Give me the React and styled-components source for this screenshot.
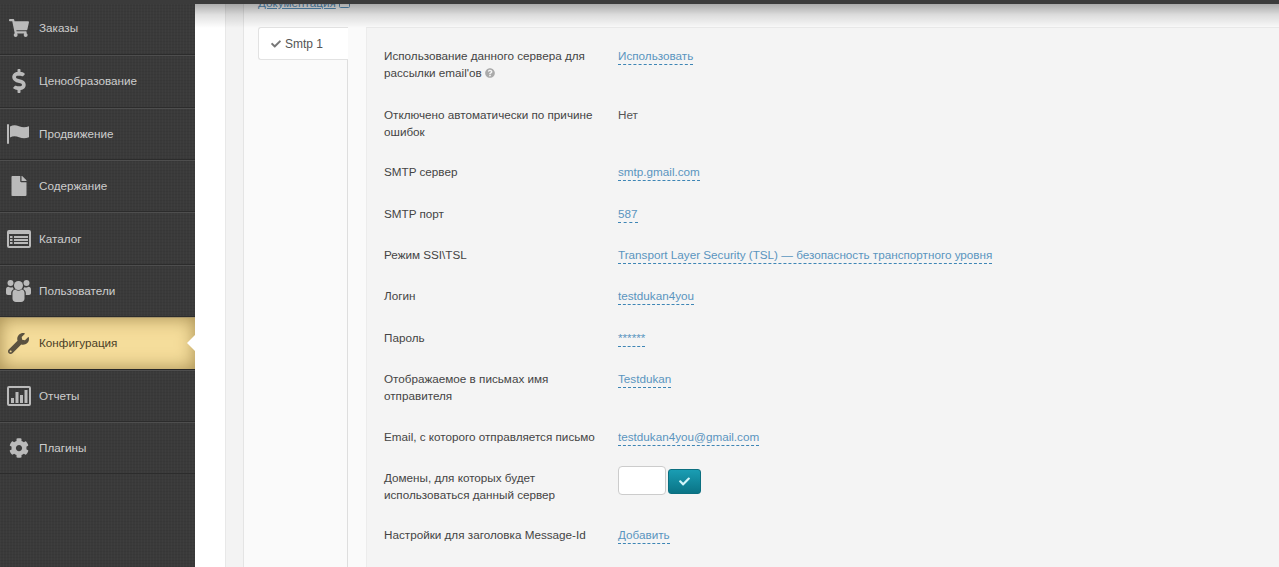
import React from "react";
import styled, { createGlobalStyle } from "styled-components";
import { FaShoppingCart, FaDollarSign, FaFile, FaWrench, FaCog, FaCheck, FaQuestionCircle } from "react-icons/fa";

const Global = createGlobalStyle`
  html, body { margin: 0; padding: 0; height: 100%; overflow: hidden; background: #fff; }
  #root { height: 567px; }
  * { box-sizing: border-box; }
`;
const Page = styled.div`
  position: relative; display: flex; height: 567px; overflow: hidden;
  font: 11.7px/16px "Liberation Sans", Arial, sans-serif; color: #444;
`;
const TopShade = styled.div`
  position: absolute; left: 0; right: 0; top: 0; height: 4px; background: #3b3b3b; z-index: 5;
  &::after {
    content: ""; position: absolute; left: 195px; right: 0; top: 4px; height: 24px;
    background: linear-gradient(rgba(0,0,0,.32), rgba(0,0,0,.12) 45%, rgba(0,0,0,0));
  }
`;
const Sidebar = styled.nav`
  width: 195px; flex: none; padding-top: 2.8px;
  background-color: #3a3a3a;
  background-image:
    repeating-linear-gradient(90deg, rgba(255,255,255,.018) 0 1px, transparent 1px 3px),
    repeating-linear-gradient(0deg, rgba(0,0,0,.05) 0 1px, transparent 1px 3px);
`;
const Item = styled.div`
  position: relative; height: 52.4px; display: flex; align-items: center;
  padding-left: 39px;
  color: ${p => (p.$active ? "#4a3f28" : "#cdcdcd")};
  border-bottom: 1px solid ${p => (p.$active ? "#262626" : "#2c2c2c")};
  border-top: 1px solid ${p => (p.$active ? "#a8966a" : "#4e4e4e")};
  ${p => (p.$first ? "border-top: none;" : "")}
  ${p => (p.$active ? `
    background: #f5dd9b;
    box-shadow: inset 0 0 18px rgba(110,85,30,.6);
  ` : "")}
`;
const IconSlot = styled.span`
  position: absolute; left: 0; top: 0; bottom: 0; width: 37px;
  display: flex; align-items: center; justify-content: center;
  color: ${p => (p.$active ? "#5b5240" : "#bababa")};
  font-size: ${p => p.$size || 22}px;
`;
const Arrow = styled.span`
  position: absolute; right: 0; top: 50%; margin-top: -8px;
  border: 8px solid transparent; border-left: 0; border-right-color: #fff;
`;
const Gap = styled.div`
  width: 30px; flex: none; background: #fff;
`;
const Main = styled.main`
  flex: 1; min-width: 0; background: #f3f3f3; border-left: 1px solid #e8e8e8;
  padding-left: 17px;
`;
const Card = styled.div`
  display: flow-root; height: 100%; background: #fafafa; border-left: 1px solid #e4e4e4; padding-left: 14px;
`;
const DocLink = styled.a`
  display: flex; align-items: center; gap: 3px; height: 16px; margin-top: -5px; color: #5a94bf;
  text-decoration: underline;
`;
const Tabs = styled.div`
  display: flex; align-items: stretch; margin-top: 16px; height: 600px;
`;
const TabCol = styled.div`
  width: 90px; flex: none; border-right: 1px solid #dedede;
`;
const Tab = styled.div`
  height: 33px; margin-right: -1px; padding-left: 12px; gap: 4px;
  background: #fff; border: 1px solid #e2e2e2; border-right: 0; border-radius: 3px 0 0 3px;
  display: flex; align-items: center; color: #555; font-size: 12px;
`;
const TabCheck = styled.span`
  display: flex; color: #777; font-size: 10px;
`;
const Panel = styled.section`
  flex: 1; margin-left: 18px; padding: 20.4px 0 0 17px; background: #f4f4f4;
  border-top: 1px solid #e9e9e9; border-left: 1px solid #ececec;
  display: flex; flex-direction: column; gap: 25.4px;
`;
const Row = styled.div`
  display: flex; align-items: flex-start; min-height: 16px;
`;
const Label = styled.div`
  width: 234px; flex: none; padding-right: 19px; color: #444; line-height: 17px; margin: -1px 0;
`;
const Value = styled.span`
  color: ${p => (p.$plain ? "#555" : "#5a94bf")};
  ${p => (p.$plain ? "" : "border-bottom: 1px dashed #3d85b5; margin-bottom: -1px;")}
`;
const Help = styled.span`
  color: #aaa; font-size: 10px; margin-left: 3px; position: relative; top: 1px;
`;
const Domain = styled.div`
  display: flex; align-items: flex-start; gap: 2px; margin-top: -4px; height: 29px;
`;
const DomainInput = styled.div`
  width: 48px; height: 29px; background: #fff; border: 1px solid #ccc; border-radius: 4px;
`;
const ApplyButton = styled.button`
  width: 33px; height: 25px; margin-top: 3px; padding: 0; border: 1px solid #0b6f80; border-radius: 3px;
  background: linear-gradient(#1a9db3, #0a7486); color: #d2f5fa;
  display: flex; align-items: center; justify-content: center; font-size: 11px;
`;

const Flag = () => (
  <svg width="23" height="20" viewBox="0 0 23 20" fill="currentColor">
    <rect x="0" y="0" width="2" height="20" rx="1" />
    <path d="M3 2.500C6 .8 9 1 12 2.200c3.500 1.300 6.500 1.300 10 0v11c-3.500 1.300-6.500 1.300-10 0-3-1.200-6-1.400-9 .3z" />
  </svg>
);
const Catalog = () => (
  <svg width="24" height="18" viewBox="0 0 24 18" fill="currentColor">
    <path fillRule="evenodd" d="M2 0h20a2 2 0 0 1 2 2v14a2 2 0 0 1-2 2H2a2 2 0 0 1-2-2V2a2 2 0 0 1 2-2zm0 4v12h20V4z" />
    <rect x="3" y="6" width="2.500" height="2" /><rect x="7" y="6" width="14" height="2" />
    <rect x="3" y="9" width="2.500" height="2" /><rect x="7" y="9" width="14" height="2" />
    <rect x="3" y="12" width="2.500" height="2" /><rect x="7" y="12" width="14" height="2" />
  </svg>
);
const Users = () => (
  <svg width="25" height="23" viewBox="0 0 25 23" fill="currentColor">
    <circle cx="12.500" cy="6.500" r="4.500" />
    <circle cx="4.500" cy="4" r="3" /><circle cx="20.500" cy="4" r="3" />
    <path d="M6.500 14c0-2.500 1.800-3.500 3-3.500 1 .8 1.900 1.200 3 1.200s2-.4 3-1.200c1.200 0 3 1 3 3.500v5.500c0 2-1.500 3.500-3.500 3.500h-5c-2 0-3.500-1.500-3.500-3.500z" />
    <path d="M0 10.500C0 8.500 1 8 2.500 7.800c.6.500 1.200.7 2 .7.800 0 1.400-.2 2-.6.300 1 .7 1.700 1.500 2.200-1.800.8-2.800 2.300-2.800 4V16H2c-1.200 0-2-.8-2-2z" />
    <path d="M25 10.500c0-2-1-2.500-2.500-2.700-.6.500-1.200.7-2 .7-.8 0-1.400-.2-2-.6-.3 1-.7 1.700-1.500 2.200 1.800.8 2.800 2.300 2.800 4V16H23c1.200 0 2-.8 2-2z" />
  </svg>
);
const Report = () => (
  <svg width="24" height="20" viewBox="0 0 24 20" fill="currentColor">
    <path fillRule="evenodd" d="M2 0h20a2 2 0 0 1 2 2v16a2 2 0 0 1-2 2H2a2 2 0 0 1-2-2V2a2 2 0 0 1 2-2zm0 2v16h20V2z" />
    <rect x="4" y="12" width="3" height="5" /><rect x="8.500" y="6" width="3" height="11" />
    <rect x="13" y="9" width="3" height="8" /><rect x="17.500" y="4" width="3" height="13" />
  </svg>
);
const ExternalBox = () => (
  <svg width="11" height="9" viewBox="0 0 11 9" fill="none" stroke="currentColor">
    <rect x=".5" y=".5" width="10" height="8" rx="1" />
  </svg>
);

const nav = [
  ["Заказы", FaShoppingCart, 20],
  ["Ценообразование", FaDollarSign, 24],
  ["Продвижение", Flag, 21],
  ["Содержание", FaFile, 20],
  ["Каталог", Catalog, 24],
  ["Пользователи", Users, 24],
  ["Конфигурация", FaWrench, 21, true],
  ["Отчеты", Report, 24],
  ["Плагины", FaCog, 20],
];
const rows = [
  ["Отключено автоматически по причине ошибок", "Нет", true],
  ["SMTP сервер", "smtp.gmail.com"],
  ["SMTP порт", "587"],
  ["Режим SSI\\TSL", "Transport Layer Security (TSL) — безопасность транспортного уровня"],
  ["Логин", "testdukan4you"],
  ["Пароль", "******"],
  ["Отображаемое в письмах имя отправителя", "Testdukan"],
  ["Email, с которого отправляется письмо", "testdukan4you@gmail.com"],
];

export default function App() {
  return (
    <Page>
      <Global />
      <TopShade />
      <Sidebar>
        {nav.map(([label, Icon, size, active], i) => (
          <Item key={label} $active={active} $first={i === 0}>
            <IconSlot $active={active} $size={size}><Icon /></IconSlot>
            {label}
            {active && <Arrow />}
          </Item>
        ))}
      </Sidebar>
      <Gap />
      <Main>
        <Card>
          <DocLink>Документация <ExternalBox /></DocLink>
          <Tabs>
            <TabCol>
              <Tab><TabCheck><FaCheck /></TabCheck>Smtp 1</Tab>
            </TabCol>
            <Panel>
              <Row>
                <Label>Использование данного сервера для рассылки email'ов<Help><FaQuestionCircle /></Help></Label>
                <Value>Использовать</Value>
              </Row>
              {rows.map(([l, v, plain]) => (
                <Row key={l}><Label>{l}</Label><Value $plain={plain}>{v}</Value></Row>
              ))}
              <Row>
                <Label>Домены, для которых будет использоваться данный сервер</Label>
                <Domain>
                  <DomainInput />
                  <ApplyButton><FaCheck /></ApplyButton>
                </Domain>
              </Row>
              <Row>
                <Label>Настройки для заголовка Message-Id</Label>
                <Value>Добавить</Value>
              </Row>
            </Panel>
          </Tabs>
        </Card>
      </Main>
    </Page>
  );
}
